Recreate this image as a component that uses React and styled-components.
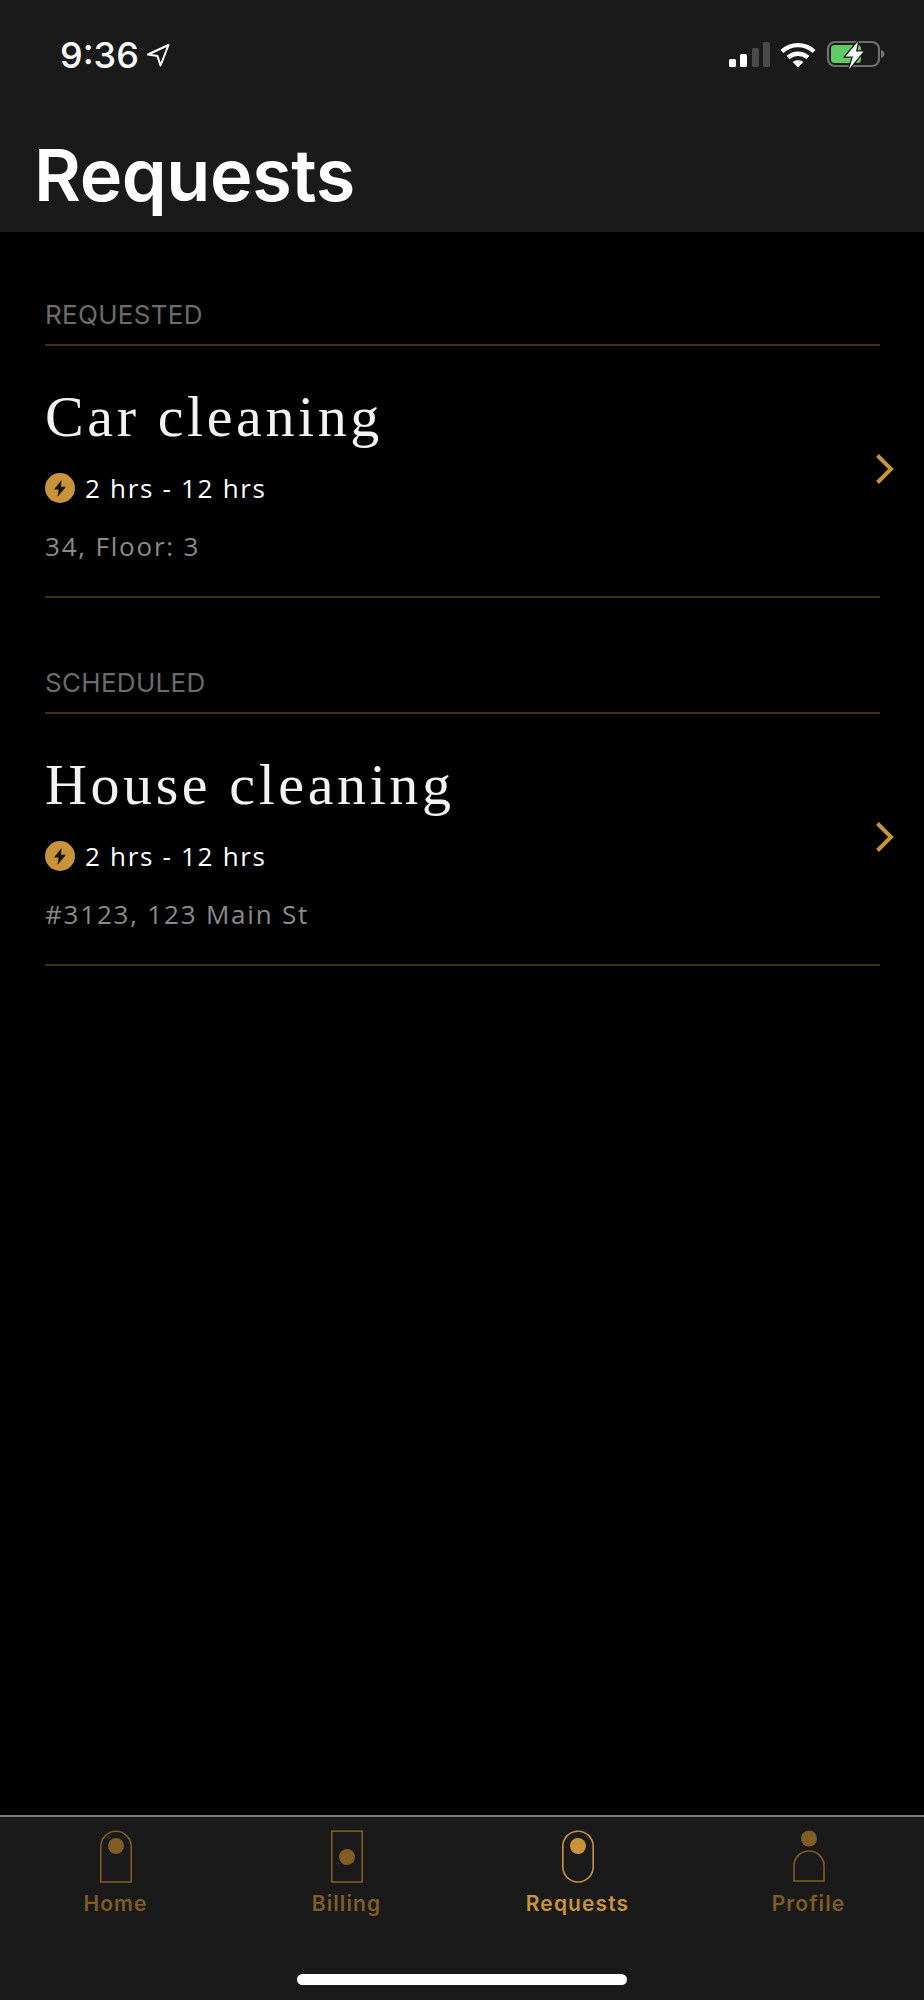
import React from "react";
import styled, { createGlobalStyle } from "styled-components";

const requests = [
  { section: "REQUESTED", title: "Car cleaning", time: "2 hrs - 12 hrs", address: "34, Floor: 3" },
  { section: "SCHEDULED", title: "House cleaning", time: "2 hrs - 12 hrs", address: "#3123, 123 Main St" },
];

const tabs = [
  { label: "Home", shape: "home" },
  { label: "Billing", shape: "billing" },
  { label: "Requests", shape: "requests", active: true },
  { label: "Profile", shape: "profile" },
];

const TabIcon = ({ shape }) => (
  <svg width="34" height="54" viewBox="0 0 34 54" fill="none" stroke="currentColor" strokeWidth="1.6">
    {shape === "home" && (
      <>
        <path d="M1.8 52V16.5a15.2 15.2 0 0 1 30.4 0V52Z" />
        <circle cx="17" cy="16" r="8" fill="currentColor" stroke="none" />
      </>
    )}
    {shape === "billing" && (
      <>
        <rect x="1.8" y="1.2" width="30.4" height="50.8" />
        <circle cx="17" cy="27" r="8" fill="currentColor" stroke="none" />
      </>
    )}
    {shape === "requests" && (
      <>
        <rect x="1.8" y="1.2" width="30.4" height="50.8" rx="15.2" />
        <circle cx="17" cy="16" r="8" fill="currentColor" stroke="none" />
      </>
    )}
    {shape === "profile" && (
      <>
        <circle cx="17" cy="8.5" r="8" fill="currentColor" stroke="none" />
        <path d="M2 51V36a15 15 0 0 1 30 0V51Z" />
      </>
    )}
  </svg>
);

const App = () => {
  return (
    <Page>
      <GlobalStyle />
      <Header>
        <StatusBar>
          <Clock>
            9:36
            <svg width="24" height="24" viewBox="0 0 24 24" fill="none" stroke="#fff" strokeWidth="2" strokeLinejoin="round">
              <path d="M22.5 2 2 11.5 11.5 13 14.5 22.5Z" />
            </svg>
          </Clock>
          <StatusIcons>
            <svg width="41" height="26" viewBox="0 0 41 26">
              <rect x="0" y="17" width="7" height="8" rx="1.5" fill="#fff" />
              <rect x="11" y="12" width="7" height="13" rx="1.5" fill="#fff" />
              <rect x="23" y="6" width="7" height="19" rx="1.5" fill="#4a4a4a" />
              <rect x="34" y="0" width="7" height="25" rx="1.5" fill="#4a4a4a" />
            </svg>
            <svg width="36" height="26" viewBox="0 0 36 26" fill="none" stroke="#fff" strokeWidth="4.4">
              <path d="M2 9.5C11 1 25 1 34 9.5" />
              <path d="M8 15.5c6-5 14-5 20 0" />
              <path d="M18 25.5 12.6 20c3-2.4 7.8-2.4 10.8 0Z" fill="#fff" stroke="none" />
            </svg>
            <svg width="60" height="30" viewBox="0 0 60 30">
              <rect x="2" y="2" width="51" height="24" rx="7" fill="none" stroke="#6f6f6f" strokeWidth="2.2" />
              <rect x="5" y="5" width="30" height="18" rx="3.5" fill="#5fcb62" />
              <path d="M55 10c2.5.7 3.5 2 3.5 4s-1 3.3-3.5 4Z" fill="#6f6f6f" />
              <path d="M32 1.5 19.5 16.5H27L23 29 37.500 11.5H30Z" fill="#fff" stroke="#1a1a1a" strokeWidth="2.5" paintOrder="stroke" />
            </svg>
          </StatusIcons>
        </StatusBar>
        <Title>Requests</Title>
      </Header>
      <Main>
        {requests.map((r) => (
          <Section key={r.section}>
            <SectionLabel>{r.section}</SectionLabel>
            <Row>
              <RowTitle>{r.title}</RowTitle>
              <TimeLine>
                <BoltBadge>
                  <svg width="12" height="17" viewBox="0 0 12 17">
                    <path d="M7.5 0 0 9.5h4.5L3.5 17 12 6.8H7Z" fill="#1a1408" />
                  </svg>
                </BoltBadge>
                {r.time}
              </TimeLine>
              <Address>{r.address}</Address>
              <Chevron width="20" height="32" viewBox="0 0 20 32" fill="none" stroke="#c8933a" strokeWidth="4">
                <path d="M2.5 2.5 16 16 2.5 29.5" />
              </Chevron>
            </Row>
          </Section>
        ))}
      </Main>
      <TabBar>
        <Tabs>
          {tabs.map((t) => (
            <Tab key={t.label} $active={t.active}>
              <TabIcon shape={t.shape} />
              <TabLabel>{t.label}</TabLabel>
            </Tab>
          ))}
        </Tabs>
        <HomeIndicator />
      </TabBar>
    </Page>
  );
};

export default App;

const GlobalStyle = createGlobalStyle`
  html, body {
    margin: 0;
    padding: 0;
    background: #000;
  }
`;

const Page = styled.div`
  display: flex;
  flex-direction: column;
  width: 924px;
  height: 2000px;
  background: #000;
  font-family: Inter, "Liberation Sans", sans-serif;
`;

const Header = styled.header`
  display: flex;
  flex-direction: column;
  height: 232px;
  box-sizing: border-box;
  background: #1a1a1a;
  color: #fff;
`;

const StatusBar = styled.div`
  display: flex;
  justify-content: space-between;
  align-items: center;
  height: 56px;
  margin-top: 27px;
  padding: 0 38px 0 60px;
`;

const Clock = styled.div`
  display: flex;
  align-items: center;
  gap: 7px;
  font-size: 36px;
  font-weight: 500;
`;

const StatusIcons = styled.div`
  display: flex;
  align-items: center;
  gap: 10px;
`;

const Title = styled.h1`
  margin: 50px 0 0 34px;
  font-size: 72px;
  line-height: 84px;
  font-weight: 600;
  letter-spacing: -0.4px;
`;

const Main = styled.main`
  flex: 1;
  padding: 68px 44px 0 45px;
`;

const Section = styled.section`
  margin-bottom: 70px;
`;

const SectionLabel = styled.div`
  font-size: 26px;
  line-height: 29px;
  letter-spacing: 0.3px;
  padding-bottom: 15px;
  color: #6b6b6b;
  border-bottom: 2px solid #3f2f15;
`;

const Row = styled.div`
  position: relative;
  height: 252px;
  box-sizing: border-box;
  padding-top: 37px;
  border-bottom: 2px solid #3f2f15;
`;

const RowTitle = styled.div`
  font-family: "Liberation Serif", serif;
  font-size: 58px;
  line-height: 68px;
  letter-spacing: 3.6px;
  color: #f2f2f2;
`;

const TimeLine = styled.div`
  display: flex;
  align-items: center;
  gap: 10px;
  margin-top: 21px;
  font-family: "Open Sans", sans-serif;
  font-size: 26px;
  line-height: 32px;
  letter-spacing: 1.7px;
  color: #fff;
`;

const BoltBadge = styled.span`
  display: flex;
  align-items: center;
  justify-content: center;
  width: 30px;
  height: 30px;
  border-radius: 50%;
  background: #c8933a;
`;

const Address = styled.div`
  margin-top: 26px;
  font-family: "Open Sans", sans-serif;
  font-size: 26px;
  line-height: 32px;
  letter-spacing: 1.8px;
  color: #8a8a8a;
`;

const Chevron = styled.svg`
  position: absolute;
  right: -15px;
  top: 107px;
`;

const TabBar = styled.footer`
  height: 185px;
  box-sizing: border-box;
  display: flex;
  flex-direction: column;
  background: #1a1a1a;
  border-top: 2px solid #7d7d7d;
`;

const Tabs = styled.nav`
  display: grid;
  grid-template-columns: repeat(4, 231px);
  padding-top: 13px;
`;

const Tab = styled.div`
  display: flex;
  flex-direction: column;
  align-items: center;
  color: ${(p) => (p.$active ? "#c8933a" : "#7f5d24")};
`;

const TabLabel = styled.div`
  margin-top: 6px;
  font-size: 21px;
  line-height: 28px;
  font-weight: 600;
  letter-spacing: 1.1px;
`;

const HomeIndicator = styled.div`
  align-self: center;
  width: 330px;
  height: 11px;
  margin-top: 56px;
  border-radius: 6px;
  background: #fff;
`;
